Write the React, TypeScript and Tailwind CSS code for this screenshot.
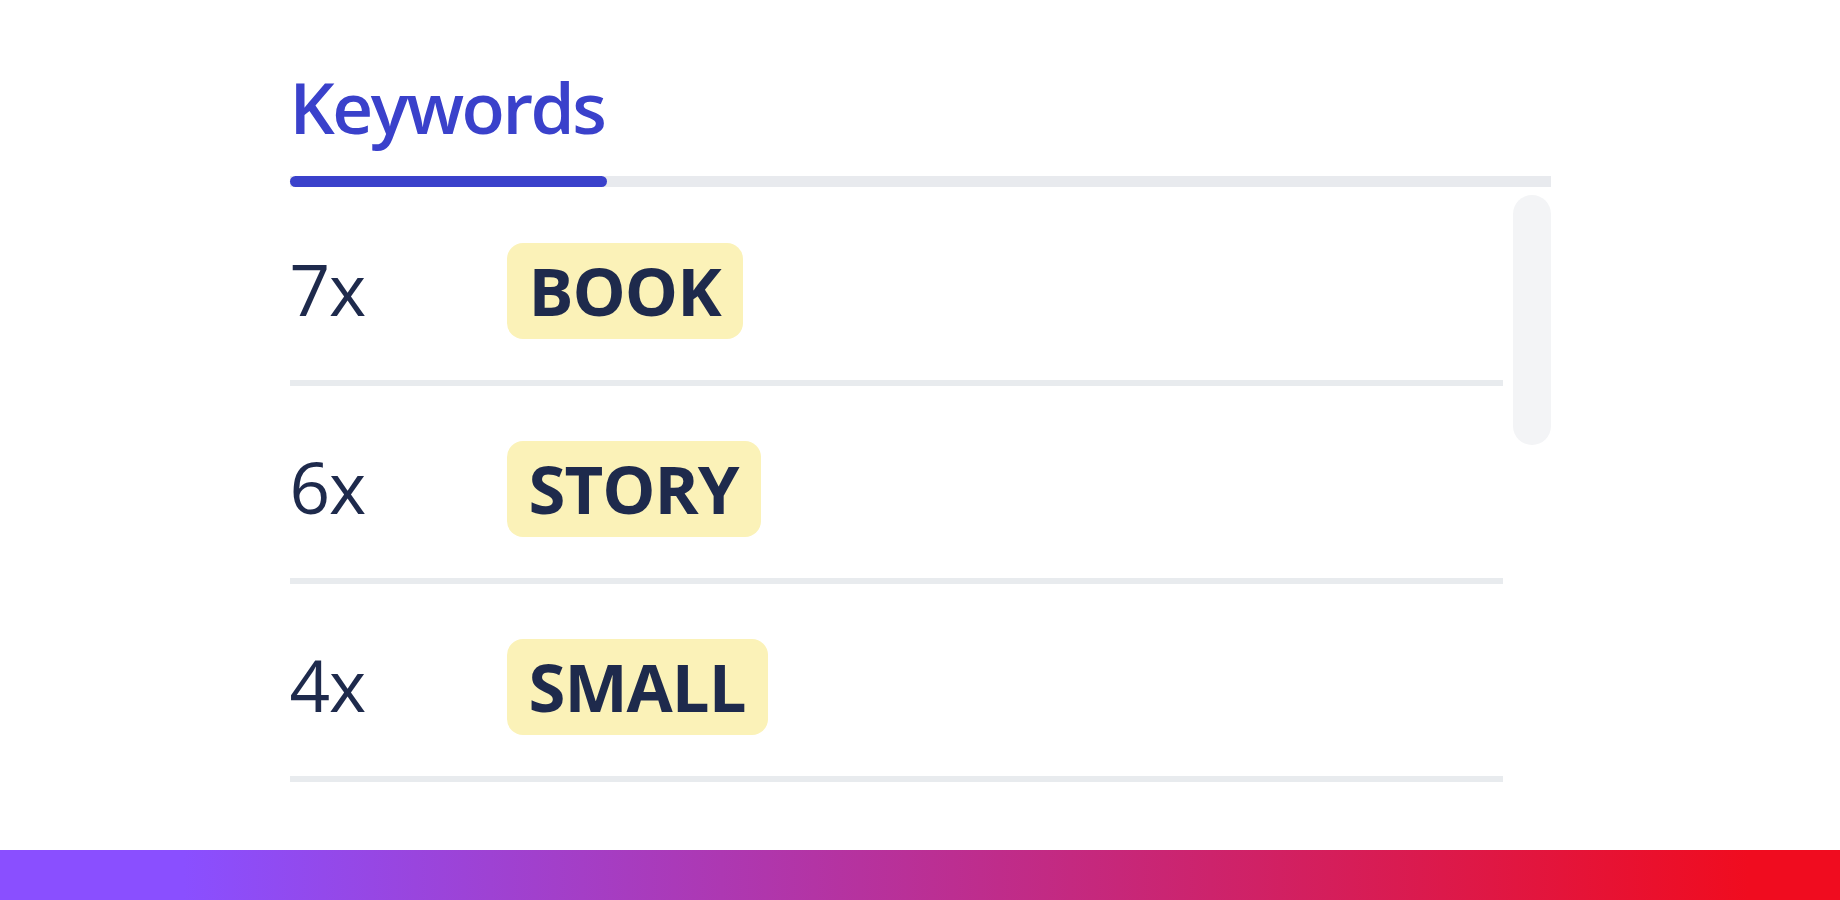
import React from "react";

const rows = [
  { count: "7x", word: "BOOK" },
  { count: "6x", word: "STORY" },
  { count: "4x", word: "SMALL" },
];

export default function App() {
  return (
    <div
      className="flex h-screen flex-col bg-white"
      style={{ fontFamily: '"Open Sans", "Noto Sans", sans-serif' }}
    >
      <main className="flex-1 overflow-hidden">
        <div className="mx-auto w-[1261px] pt-[71px]">
          {/* Tabs */}
          <div className="flex flex-col">
            <div className="flex">
              <span className="text-[71px] font-semibold leading-[72px] tracking-[-2.5px] text-[#3a41cb]">
                Keywords
              </span>
            </div>
            <div className="mt-[33px] h-[11px] bg-[#e8eaee]">
              <div className="h-full w-[317px] rounded-full bg-[#3a41cb]" />
            </div>
          </div>

          {/* List with scrollbar */}
          <div className="flex gap-[10px]">
            <div className="flex-1 pt-px">
              {rows.map((r) => (
                <div key={r.word}>
                  <div className="flex items-baseline pt-[55px] pb-[41px]">
                    <span className="w-[217px] text-[71px] font-normal leading-[72px] tracking-[-1px] text-[#1e2a4c]">
                      {r.count}
                    </span>
                    <span className="h-[96px] rounded-[16px] bg-[#fbf2b8] px-[22px] text-[67px] font-bold leading-[94px] tracking-[-1px] text-[#1e2a4c]">
                      {r.word}
                    </span>
                  </div>
                  <div className="h-[6px] bg-[#e8ebee]" />
                </div>
              ))}
            </div>
            <div className="w-[38px] pt-[8px]">
              <div className="h-[250px] rounded-full bg-[#f3f4f6]" />
            </div>
          </div>
        </div>
      </main>
      <div className="h-[50px] shrink-0 bg-[linear-gradient(to_right,#8a4fff_10%,#f00c1f_95%)]" />
    </div>
  );
}
